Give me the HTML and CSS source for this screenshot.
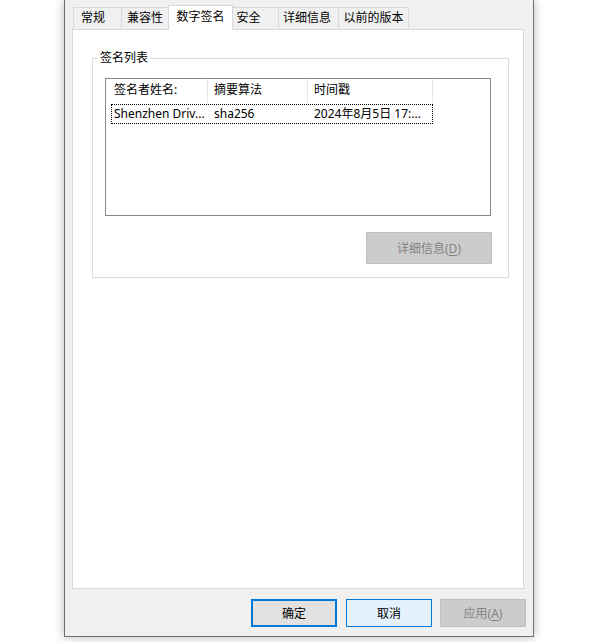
FILE: index.html
```html
<!DOCTYPE html>
<html lang="zh-CN">
<head>
<meta charset="utf-8">
<title>属性 - 数字签名</title>
<link rel="stylesheet" href="styles.css">
</head>
<body>
<div class="window">
  <div class="tabs">
    <div class="tab t1">常规</div>
    <div class="tab t2">兼容性</div>
    <div class="tab t3 active">数字签名</div>
    <div class="tab t4">安全</div>
    <div class="tab t5">详细信息</div>
    <div class="tab t6">以前的版本</div>
  </div>
  <div class="panel">
    <fieldset class="group">
      <legend class="group-title">签名列表</legend>
      <div class="listview">
        <div class="lv-header">
          <div class="hcell h1">签名者姓名:</div>
          <div class="hcell h2">摘要算法</div>
          <div class="hcell h3">时间戳</div>
        </div>
        <div class="lv-row">
          <div class="cell c1">Shenzhen Driv...</div>
          <div class="cell c2">sha256</div>
          <div class="cell c3">2024年8月5日 17:...</div>
        </div>
      </div>
      <div class="group-actions">
        <div class="btn btn-disabled btn-details">详细信息(<u>D</u>)</div>
      </div>
    </fieldset>
  </div>
  <div class="actions">
    <div class="btn btn-default">确定</div>
    <div class="btn btn-hover">取消</div>
    <div class="btn btn-disabled">应用(<u>A</u>)</div>
  </div>
</div>
</body>
</html>
```
FILE: styles.css
```css
html, body {
  margin: 0;
  padding: 0;
}
body {
  width: 600px;
  height: 642px;
  overflow: hidden;
  background: #ffffff;
  font-family: "Noto Sans", "Noto Sans CJK SC", sans-serif;
  font-size: 12px;
  color: #000;
}
.window {
  margin-left: 64px;
  width: 470px;
  height: 637px;
  box-sizing: border-box;
  padding-top: 5px;
  border: 1px solid #707070;
  border-top: 0;
  background: #f0f0f0;
  box-shadow: 0 0 10px rgba(0, 0, 0, 0.28);
}
.tabs {
  display: flex;
  align-items: flex-end;
  height: 24px;
  padding-left: 8px;
}
.tab {
  box-sizing: border-box;
  height: 22px;
  border: 1px solid #d9d9d9;
  border-bottom: 0;
  background: #f0f0f0;
  text-align: center;
  line-height: 20px;
  margin-left: -1px;
  white-space: nowrap;
}
.tab.t1 { margin-left: 0; width: 49px; padding-right: 9px; }
.tab.t2 { width: 48px; }
.tab.t3 { width: 65px; }
.tab.t4 { width: 47px; padding-right: 14px; }
.tab.t5 { width: 61px; padding-right: 3px; }
.tab.t6 { width: 71px; }
.tab.active {
  height: 25px;
  background: #ffffff;
  margin-bottom: -1px;
  line-height: 21px;
  position: relative;
  z-index: 1;
}
.panel {
  margin-left: 7px;
  width: 452px;
  height: 560px;
  box-sizing: border-box;
  border: 1px solid #d9d9d9;
  background: #ffffff;
}
.group {
  margin: 20px 0 0 19px;
  width: 417px;
  box-sizing: border-box;
  padding: 0 0 13px 0;
  border: 1px solid #dcdcdc;
  min-inline-size: 0;
}
.group-title {
  margin-left: 5px;
  padding: 0 2px;
  line-height: 16px;
  font-size: 12px;
}
.listview {
  margin: 12px 0 0 12px;
  width: 386px;
  height: 138px;
  box-sizing: border-box;
  border: 1px solid #828790;
  background: #ffffff;
}
.lv-header {
  display: flex;
  height: 24px;
}
.hcell {
  box-sizing: border-box;
  height: 24px;
  line-height: 22px;
  border-right: 1px solid #e5e5e5;
  white-space: nowrap;
}
.h1 { width: 102px; padding-left: 8px; }
.h2 { width: 100px; padding-left: 6px; }
.h3 { width: 125px; padding-left: 6px; }
.lv-row {
  display: flex;
  margin: 1px 0 0 5px;
  width: 322px;
  height: 20px;
  box-sizing: border-box;
  border: 1px dotted #000;
  line-height: 18px;
}
.cell {
  box-sizing: border-box;
  white-space: nowrap;
  overflow: hidden;
}
.c1 { width: 95px; padding-left: 2px; }
.c2 { width: 100px; padding-left: 7px; }
.c3 { flex: 1; padding-left: 7px; }
.group-actions {
  display: flex;
  justify-content: flex-end;
  margin-top: 16px;
  padding-right: 16px;
}
.btn {
  box-sizing: border-box;
  width: 86px;
  height: 28px;
  display: flex;
  align-items: center;
  justify-content: center;
  white-space: nowrap;
}
.btn u {
  text-decoration: underline;
  text-underline-offset: 2px;
}
.btn-details {
  width: 126px;
  height: 32px;
}
.btn-disabled {
  background: #cccccc;
  border: 1px solid #bfbfbf;
  color: #838383;
}
.btn-default {
  background: #e1e1e1;
  border: 2px solid #0078d7;
  margin-right: 1px;
}
.btn-hover {
  background: #e5f1fb;
  border: 1px solid #0078d7;
}
.actions {
  display: flex;
  gap: 8px;
  margin-top: 10px;
  padding-left: 186px;
}
```
